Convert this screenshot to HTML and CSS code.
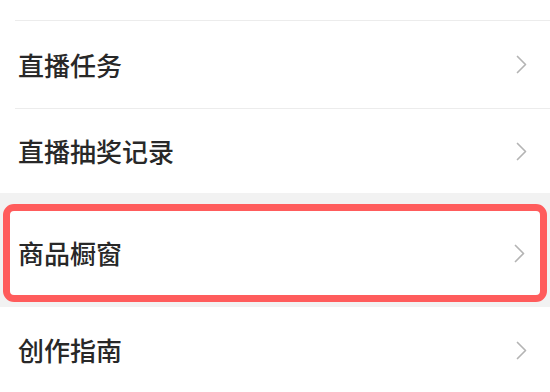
FILE: index.html
```html
<!DOCTYPE html>
<html lang="zh-CN">
<head>
<meta charset="utf-8">
<title>设置列表</title>
<link rel="stylesheet" href="styles.css">
</head>
<body>
<div class="list">
  <div class="row row-partial"></div>
  <div class="sep"></div>
  <div class="row row-first">
    <span class="label">直播任务</span>
    <svg class="chev" width="11" height="19" viewBox="0 0 11 19"><polyline points="1.5,1.5 9.5,9.5 1.5,17.5" fill="none" stroke="#b4b4b4" stroke-width="1.7" stroke-linecap="round" stroke-linejoin="round"/></svg>
  </div>
  <div class="sep"></div>
  <div class="row row-second">
    <span class="label">直播抽奖记录</span>
    <svg class="chev" width="11" height="19" viewBox="0 0 11 19"><polyline points="1.5,1.5 9.5,9.5 1.5,17.5" fill="none" stroke="#b4b4b4" stroke-width="1.7" stroke-linecap="round" stroke-linejoin="round"/></svg>
  </div>
  <div class="group">
    <div class="row highlight">
      <span class="label">商品橱窗</span>
      <svg class="chev" width="11" height="19" viewBox="0 0 11 19"><polyline points="1.5,1.5 9.5,9.5 1.5,17.5" fill="none" stroke="#b4b4b4" stroke-width="1.7" stroke-linecap="round" stroke-linejoin="round"/></svg>
    </div>
  </div>
  <div class="row row-last">
    <span class="label">创作指南</span>
    <svg class="chev" width="11" height="19" viewBox="0 0 11 19"><polyline points="1.5,1.5 9.5,9.5 1.5,17.5" fill="none" stroke="#b4b4b4" stroke-width="1.7" stroke-linecap="round" stroke-linejoin="round"/></svg>
  </div>
</div>
</body>
</html>
```

FILE: styles.css
```css
html, body {
  margin: 0;
  padding: 0;
  background: #ffffff;
}

body {
  width: 550px;
  height: 392px;
  overflow: hidden;
  font-family: "Noto Sans CJK SC", "Noto Sans", sans-serif;
  color: #282828;
}

.list {
  display: flex;
  flex-direction: column;
}

.row {
  display: flex;
  align-items: center;
  justify-content: space-between;
  padding: 0 23px 0 18px;
  background: #ffffff;
  box-sizing: border-box;
}

.row-partial {
  height: 20px;
}

.row-first {
  height: 87px;
}

.row-second {
  height: 84px;
}

.row-last {
  height: 86px;
}

.sep {
  height: 1px;
  margin-left: 15px;
  background: #ececec;
}

.label {
  font-size: 26px;
  font-weight: 500;
  line-height: 1;
  letter-spacing: 0;
}

.chev {
  display: block;
  flex: none;
}

.group {
  background: #f2f2f2;
  padding: 11px 3px 5px 3px;
}

.highlight {
  height: 98px;
  border: 7px solid #ff5c5c;
  border-radius: 11px;
  padding: 0 15px 0 8px;
}
```
